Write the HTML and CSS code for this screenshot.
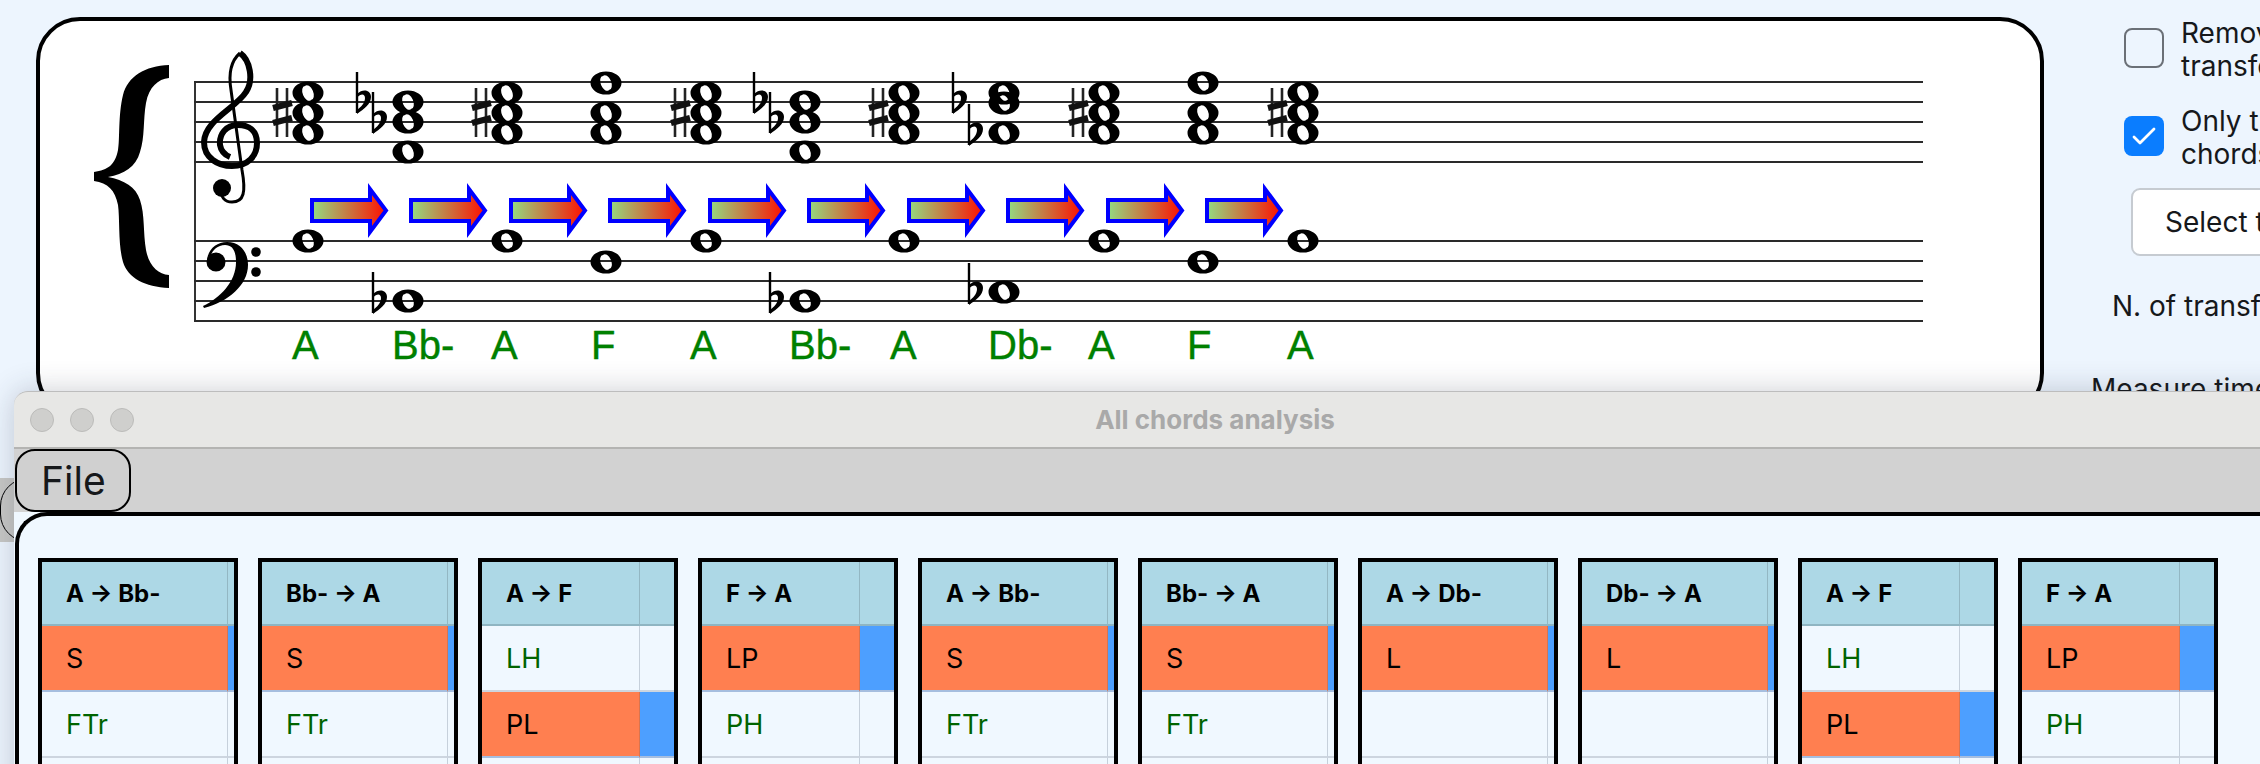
FILE: index.html
```html
<!DOCTYPE html>
<html lang="en">
<head>
<meta charset="utf-8">
<title>All chords analysis</title>
<link rel="stylesheet" href="styles.css">
</head>
<body>
<div class="page">
  <section class="score-card">
    <svg class="score" viewBox="40 21 2000 372" width="2000" height="372" xmlns="http://www.w3.org/2000/svg">
      <defs>
        <linearGradient id="arrowFill" x1="0" x2="1" y1="0" y2="0">
          <stop offset="0" stop-color="#93dc82"/>
          <stop offset="1" stop-color="#ff0f00"/>
        </linearGradient>
        <path id="note" fill-rule="evenodd" d="M-15.5 0A15.5 11.5 0 1 0 15.5 0A15.5 11.5 0 1 0 -15.5 0ZM-3 -7A4.4 7.8 -22 1 0 3 7A4.4 7.8 -22 1 0 -3 -7Z"/>
        <g id="sharp" class="sharp">
          <path class="sharp-stem" d="M4 0V49M14 0V49"/>
          <path class="sharp-bar" d="M0 20L19 15M0 35L19 30"/>
        </g>
        <g id="flat">
          <path class="flat-stem" d="M0 0V41"/>
          <path d="M0 42C7 37 14 32 14 25C14 18 6 16 0 22L0 26C4 21 8 22 8 26C8 31 4 35 0 38Z"/>
        </g>
        <g id="arrow">
          <path class="arrow-shape" d="M1 15H59V4L75 25.5L59 47V36H1Z" fill="url(#arrowFill)"/>
        </g>
        <g id="chordA">
          <use href="#note" y="93"/><use href="#note" y="113"/><use href="#note" y="133"/>
          <use href="#note" y="241"/>
          <use href="#sharp" x="-35" y="88"/>
        </g>
        <g id="chordB">
          <use href="#note" y="102"/><use href="#note" y="122"/><use href="#note" y="152"/>
          <use href="#note" y="301"/>
          <use href="#flat" x="-51" y="72"/><use href="#flat" x="-35" y="92"/>
          <use href="#flat" x="-35" y="272"/>
        </g>
        <g id="chordF">
          <use href="#note" y="83"/><use href="#note" y="113"/><use href="#note" y="133"/>
          <use href="#note" y="262"/>
        </g>
        <g id="chordD">
          <use href="#note" y="93"/><use href="#note" y="103"/><use href="#note" y="133"/>
          <use href="#note" y="292"/>
          <use href="#flat" x="-51" y="72"/><use href="#flat" x="-35" y="104"/>
          <use href="#flat" x="-35" y="263"/>
        </g>
      </defs>

      <path class="brace" d="M169 65C145 66 128 76 123 95C118 115 120 140 118 150C115 165 108 170 94 172V181C108 183 115 190 118 205C120 220 118 245 123 262C128 278 145 287 169 288V275C158 274 149 266 146 250C143 232 145 215 140 200C136 187 124 180 108 177C124 174 136 167 140 152C145 137 143 120 146 103C149 87 158 79 169 78Z"/>

      <path class="staff" d="M194 82H1923M194 102H1923M194 122H1923M194 142H1923M194 162H1923M194 241H1923M194 261H1923M194 281H1923M194 301H1923M194 321H1923M195 81V322"/>

      <g class="clef">
        <path class="clef-thin" d="M240 53C232 60 228 72 231 90L242 170C246 192 244 202 232 202C225 202 220 197 222 190"/>
        <path class="clef-thick" d="M240 53C250 60 254 80 246 92C236 108 205 120 204 142C204 158 218 166 232 166C248 166 257 156 257 143C257 130 248 125 238 125C226 125 219 134 220 145C221 151 225 155 230 157"/>
        <circle cx="222" cy="188" r="9"/>
        <path d="M207 262C207 250 216 242 227 242C241 242 248 253 248 265C248 285 228 302 204 308L203 306C220 298 236 282 236 262C236 250 232 245 225 245C218 245 212 250 211 256Z"/>
        <circle cx="216" cy="262" r="9.5"/>
        <circle cx="256" cy="252" r="4.8"/>
        <circle cx="256" cy="272" r="4.8"/>
      </g>

      <use href="#chordA" x="308"/>
      <use href="#chordB" x="408"/>
      <use href="#chordA" x="507"/>
      <use href="#chordF" x="606"/>
      <use href="#chordA" x="706"/>
      <use href="#chordB" x="805"/>
      <use href="#chordA" x="904"/>
      <use href="#chordD" x="1004"/>
      <use href="#chordA" x="1104"/>
      <use href="#chordF" x="1203"/>
      <use href="#chordA" x="1303"/>

      <use href="#arrow" x="311" y="185"/>
      <use href="#arrow" x="410" y="185"/>
      <use href="#arrow" x="510" y="185"/>
      <use href="#arrow" x="609" y="185"/>
      <use href="#arrow" x="709" y="185"/>
      <use href="#arrow" x="808" y="185"/>
      <use href="#arrow" x="908" y="185"/>
      <use href="#arrow" x="1007" y="185"/>
      <use href="#arrow" x="1107" y="185"/>
      <use href="#arrow" x="1206" y="185"/>

      <g class="chord-names">
        <text x="292" y="359">A</text>
        <text x="392" y="359">Bb-</text>
        <text x="491" y="359">A</text>
        <text x="591" y="359">F</text>
        <text x="690" y="359">A</text>
        <text x="789" y="359">Bb-</text>
        <text x="890" y="359">A</text>
        <text x="988" y="359">Db-</text>
        <text x="1088" y="359">A</text>
        <text x="1187" y="359">F</text>
        <text x="1287" y="359">A</text>
      </g>
    </svg>
  </section>

  <aside class="sidebar">
    <label class="check-row">
      <span class="check-box"></span>
      <span class="check-label">Remove unused<br>transformations</span>
    </label>
    <label class="check-row check-row-next">
      <span class="check-box check-box-on">
        <svg viewBox="0 0 40 40" width="40" height="40"><path d="M10 21L16 27L30 13" fill="none" stroke="#fff" stroke-width="2.8" stroke-linecap="round" stroke-linejoin="round"/></svg>
      </span>
      <span class="check-label">Only transformed<br>chords</span>
    </label>
    <button class="select-btn" type="button">Select transformations</button>
    <div class="field-label field-transf">N. of transf.</div>
    <div class="field-label field-time">Measure time</div>
  </aside>
</div>

<div class="under-tab"><span class="under-tab-btn"></span></div>

<div class="window">
  <header class="titlebar">
    <span class="lights"><i class="light"></i><i class="light"></i><i class="light"></i></span>
    <span class="title">All chords analysis</span>
  </header>
  <nav class="menubar"><button class="menu-btn" type="button">File</button></nav>
  <main class="content">
    <div class="tables">
      <div class="tbl tbl-small">
        <div class="cell head">A → Bb-</div><div class="cell head bar"></div>
        <div class="cell on">S</div><div class="cell bar on-bar"></div>
        <div class="cell alt">FTr</div><div class="cell bar"></div>
        <div class="cell"></div><div class="cell bar"></div>
      </div>
      <div class="tbl tbl-small">
        <div class="cell head">Bb- → A</div><div class="cell head bar"></div>
        <div class="cell on">S</div><div class="cell bar on-bar"></div>
        <div class="cell alt">FTr</div><div class="cell bar"></div>
        <div class="cell"></div><div class="cell bar"></div>
      </div>
      <div class="tbl tbl-large">
        <div class="cell head">A → F</div><div class="cell head bar"></div>
        <div class="cell alt">LH</div><div class="cell bar"></div>
        <div class="cell on">PL</div><div class="cell bar on-bar"></div>
        <div class="cell"></div><div class="cell bar"></div>
      </div>
      <div class="tbl tbl-large">
        <div class="cell head">F → A</div><div class="cell head bar"></div>
        <div class="cell on">LP</div><div class="cell bar on-bar"></div>
        <div class="cell alt">PH</div><div class="cell bar"></div>
        <div class="cell"></div><div class="cell bar"></div>
      </div>
      <div class="tbl tbl-small">
        <div class="cell head">A → Bb-</div><div class="cell head bar"></div>
        <div class="cell on">S</div><div class="cell bar on-bar"></div>
        <div class="cell alt">FTr</div><div class="cell bar"></div>
        <div class="cell"></div><div class="cell bar"></div>
      </div>
      <div class="tbl tbl-small">
        <div class="cell head">Bb- → A</div><div class="cell head bar"></div>
        <div class="cell on">S</div><div class="cell bar on-bar"></div>
        <div class="cell alt">FTr</div><div class="cell bar"></div>
        <div class="cell"></div><div class="cell bar"></div>
      </div>
      <div class="tbl tbl-small">
        <div class="cell head">A → Db-</div><div class="cell head bar"></div>
        <div class="cell on">L</div><div class="cell bar on-bar"></div>
        <div class="cell"></div><div class="cell bar"></div>
        <div class="cell"></div><div class="cell bar"></div>
      </div>
      <div class="tbl tbl-small">
        <div class="cell head">Db- → A</div><div class="cell head bar"></div>
        <div class="cell on">L</div><div class="cell bar on-bar"></div>
        <div class="cell"></div><div class="cell bar"></div>
        <div class="cell"></div><div class="cell bar"></div>
      </div>
      <div class="tbl tbl-large">
        <div class="cell head">A → F</div><div class="cell head bar"></div>
        <div class="cell alt">LH</div><div class="cell bar"></div>
        <div class="cell on">PL</div><div class="cell bar on-bar"></div>
        <div class="cell"></div><div class="cell bar"></div>
      </div>
      <div class="tbl tbl-large">
        <div class="cell head">F → A</div><div class="cell head bar"></div>
        <div class="cell on">LP</div><div class="cell bar on-bar"></div>
        <div class="cell alt">PH</div><div class="cell bar"></div>
        <div class="cell"></div><div class="cell bar"></div>
      </div>
    </div>
  </main>
</div>
</body>
</html>
```
FILE: styles.css
```css
* { box-sizing: border-box; }

html, body {
  margin: 0;
  height: 764px;
  overflow: hidden;
  background: #edf5fe;
  font-family: Inter, "Liberation Sans", sans-serif;
  color: #16181b;
}

.page {
  display: flex;
  align-items: flex-start;
  width: 2260px;
  height: 764px;
  overflow: hidden;
}

/* score panel */
.score-card {
  flex: none;
  width: 2008px;
  height: 400px;
  margin: 17px 0 0 36px;
  background: #fff;
  border: 4px solid #000;
  border-radius: 44px;
  overflow: hidden;
}
.score { display: block; }
.brace { fill: #000; }
.staff { fill: none; stroke: #2a2a2a; stroke-width: 1.9; }
.clef { fill: #000; }
.clef-thin { fill: none; stroke: #000; stroke-width: 3; }
.clef-thick { fill: none; stroke: #000; stroke-width: 6; }
.sharp-stem { fill: none; stroke: #222; stroke-width: 2.6; }
.sharp-bar { fill: none; stroke: #111; stroke-width: 6; }
.flat-stem { fill: none; stroke: #000; stroke-width: 2.4; }
.arrow-shape { stroke: #0000ff; stroke-width: 4; }
.chord-names text {
  font-family: "Liberation Sans", Arial, sans-serif;
  font-size: 40px;
  fill: #008000;
  stroke: #008000;
  stroke-width: 0.4;
}

/* sidebar */
.sidebar {
  flex: none;
  width: 216px;
  padding-top: 17px;
  font-size: 28px;
  line-height: 33px;
  white-space: nowrap;
}
.check-row {
  display: flex;
  align-items: flex-start;
  gap: 17px;
  height: 66px;
  margin-left: 80px;
}
.check-row-next { margin-top: 22px; }
.check-box {
  flex: none;
  width: 40px;
  height: 40px;
  margin-top: 11px;
  border: 2px solid #6b7077;
  border-radius: 8px;
}
.check-box-on {
  border: 0;
  background: #0a7dff;
}
.check-box-on svg { display: block; }
.select-btn {
  display: block;
  width: 340px;
  height: 68px;
  margin: 17px 0 0 87px;
  padding: 0 0 0 32px;
  font: inherit;
  color: inherit;
  text-align: left;
  background: #fff;
  border: 2px solid #c6cbd1;
  border-radius: 9px;
}
.field-label { height: 33px; }
.field-transf { margin: 34px 0 0 68px; }
.field-time { margin: 50px 0 0 47px; }

/* strip of the page control that peeks out beside the window */
.under-tab {
  position: absolute;
  left: 0;
  top: 478px;
  width: 14px;
  height: 64px;
  background: #c8c8c6;
  overflow: hidden;
}
.under-tab-btn {
  display: block;
  width: 120px;
  height: 64px;
  border: 1.5px solid #000;
  border-radius: 28px;
}

/* floating window */
.window {
  position: absolute;
  left: 14px;
  top: 391px;
  width: 2402px;
  height: 500px;
  background: #f0f8ff;
  border-radius: 14px 14px 0 0;
  box-shadow: 0 0 30px rgba(40, 50, 70, 0.24);
}
.titlebar {
  position: relative;
  display: flex;
  align-items: center;
  justify-content: center;
  height: 58px;
  background: #e7e7e5;
  border-top: 1px solid #bdbdbd;
  border-bottom: 2px solid #b4b4b2;
  border-radius: 14px 14px 0 0;
}
.lights {
  position: absolute;
  left: 16px;
  top: 16px;
  display: flex;
  gap: 16px;
}
.light {
  display: block;
  width: 24px;
  height: 24px;
  background: #cfcfcd;
  border: 1px solid #bcbcba;
  border-radius: 50%;
}
.title {
  font-size: 26px;
  font-weight: 700;
  color: #a9a9a9;
}
.menubar {
  display: flex;
  height: 63px;
  padding-left: 1px;
  background: #d2d2d2;
}
.menu-btn {
  width: 116px;
  height: 63px;
  padding: 0 0 0 24px;
  font: 39px Inter, "Liberation Sans", sans-serif;
  color: #16181b;
  text-align: left;
  background: #d0d0d0;
  border: 2px solid #000;
  border-radius: 20px;
}
.content {
  margin-left: 1px;
  padding: 42px 0 0 19px;
  height: 400px;
  background: #f0f8ff;
  border-top: 4px solid #000;
  border-left: 4px solid #000;
  border-top-left-radius: 32px;
}
.tables {
  display: flex;
  gap: 20px;
}
.tbl {
  flex: none;
  display: grid;
  grid-template-rows: 64px;
  grid-auto-rows: 66px;
  width: 200px;
  border: 4px solid #000;
  font-size: 27px;
  color: #000;
}
.tbl-small { grid-template-columns: 186px 6px; }
.tbl-large { grid-template-columns: 158px 34px; }
.cell {
  display: flex;
  align-items: center;
  padding-left: 24px;
  overflow: hidden;
  white-space: nowrap;
  border-right: 1.5px solid #c6d0db;
  border-bottom: 2px solid #cdd5df;
}
.cell.bar {
  padding: 0;
  border-right: 0;
}
.head {
  font-size: 24px;
  font-weight: 700;
  background: #add8e6;
  border-right-color: #93b7c3;
  border-bottom-color: #8fb5c2;
}
.head.bar { background: #add8e6; }
.on {
  background: #ff7f50;
  border-right-color: #d9744f;
  border-bottom-color: #a6bedf;
}
.on-bar {
  background: #4d9fff;
  border-bottom-color: #a6bedf;
}
.alt { color: #006400; }
```
